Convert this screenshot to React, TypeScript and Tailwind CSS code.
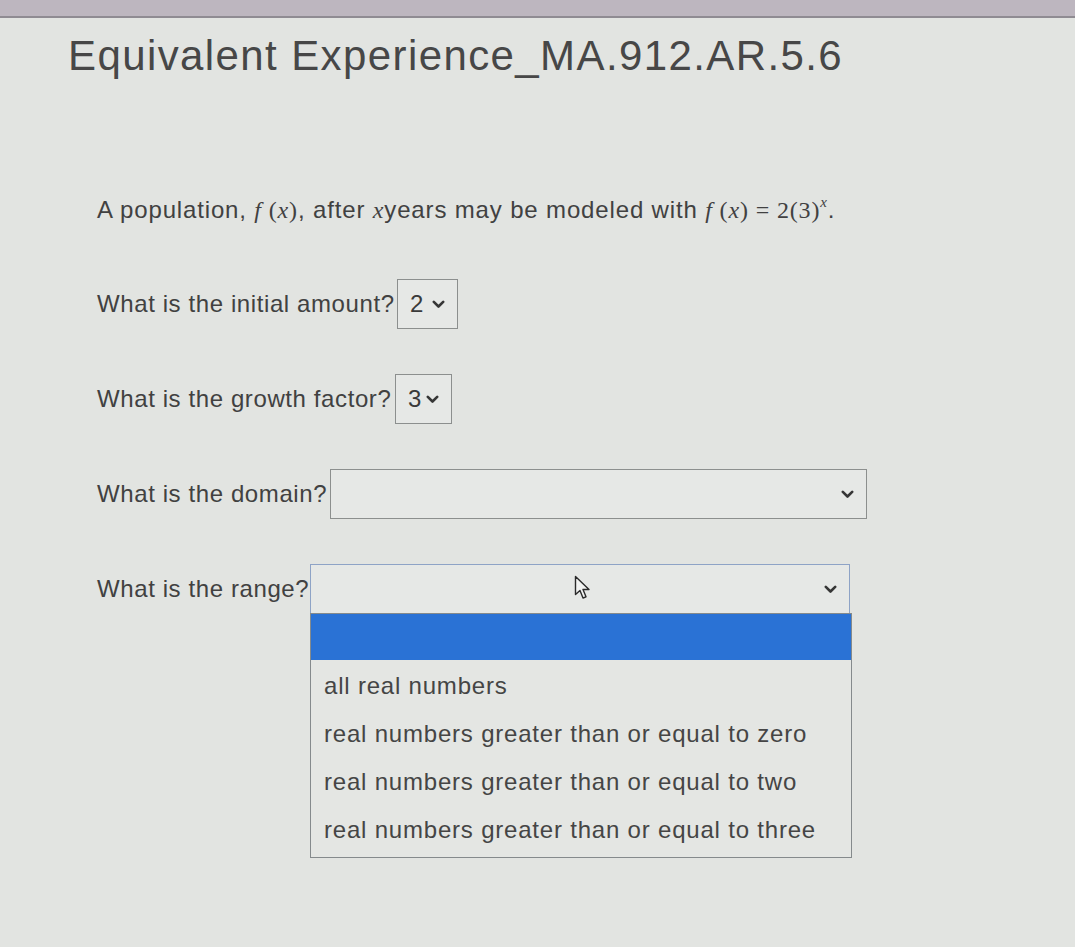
import React from 'react'

const SANS = { fontFamily: '"Liberation Sans", Arial, Helvetica, sans-serif' }

const OPTIONS = [
  'all real numbers',
  'real numbers greater than or equal to zero',
  'real numbers greater than or equal to two',
  'real numbers greater than or equal to three',
]

function Chevron() {
  return (
    <svg width="13" height="9" viewBox="0 0 13 9" className="shrink-0">
      <polyline points="1.8,1.8 6.5,6.5 11.2,1.8" fill="none" stroke="#363636" strokeWidth="2.6" strokeLinecap="round" strokeLinejoin="round" />
    </svg>
  )
}

function Cursor() {
  return (
    <svg width="18" height="26" viewBox="0 0 18 26" className="absolute left-[263px] top-[10px]">
      <path d="M1.5 1.5 L1.5 19.5 L6 15.5 L9 23 L12 21.8 L9 14.5 L15 14.5 Z" fill="#f2f3f2" stroke="#2b2b2b" strokeWidth="1.4" strokeLinejoin="round" />
    </svg>
  )
}

function Select({ value, width, focused, children }: { value?: string; width: string; focused?: boolean; children?: React.ReactNode }) {
  return (
    <div
      className={`relative shrink-0 ${width} h-[50px] flex items-center justify-between pl-[12px] pr-[12px] border ${
        focused ? 'border-[#8ea3c6]' : 'border-[#8c8f8e]'
      } bg-[#e6e8e6]`}
    >
      <span className="text-[24px] text-[#3a3a3a]">{value}</span>
      <Chevron />
      {children}
    </div>
  )
}

function Mi({ children }: { children: React.ReactNode }) {
  return <span className="italic" style={{ fontFamily: '"Liberation Serif", "Times New Roman", serif' }}>{children}</span>
}

function Mo({ children }: { children: React.ReactNode }) {
  return <span style={{ fontFamily: '"Liberation Serif", "Times New Roman", serif' }}>{children}</span>
}

export default function App() {
  return (
    <div className="min-h-[947px] w-full bg-[#e2e4e1] text-[#414141] overflow-hidden" style={SANS}>
      <div className="h-[18px] bg-[#bdb6bf] border-b-2 border-[#8f8b92]" />

      <h1 className="ml-[68px] mt-[17px] text-[42px] leading-none tracking-[1.4px] text-[#474747] font-normal">
        Equivalent Experience_MA.912.AR.5.6
      </h1>

      <div className="ml-[97px] mt-[121px] flex flex-col">
        <p className="text-[24px] leading-none tracking-[0.85px] whitespace-nowrap">
          A population, <Mi>f</Mi>
          <Mo> (</Mo>
          <Mi>x</Mi>
          <Mo>)</Mo>, after <Mi>x</Mi>years may be modeled with <Mi>f</Mi>
          <Mo> (</Mo>
          <Mi>x</Mi>
          <Mo>) = 2(3)</Mo>
          <sup className="text-[15px] top-[-0.75em]"><Mi>x</Mi></sup>.
        </p>

        <div className="mt-[57px] flex flex-col gap-[45px] text-[24px] tracking-[0.6px] whitespace-nowrap">
          <div className="flex items-center">
            <span className="w-[300px] shrink-0">What is the initial amount?</span>
            <Select value="2" width="w-[61px]" />
          </div>
          <div className="flex items-center">
            <span className="w-[298px] shrink-0">What is the growth factor?</span>
            <Select value="3" width="w-[57px]" />
          </div>
          <div className="flex items-center">
            <span className="w-[233px] shrink-0">What is the domain?</span>
            <Select width="w-[537px]" />
          </div>
          <div className="flex items-center">
            <span className="w-[213px] shrink-0">What is the range?</span>
            <Select width="w-[540px]" focused>
              <Cursor />
              <div className="absolute left-[-1px] top-full w-[542px] border border-[#858a8c] bg-[#e4e6e3] flex flex-col pb-[3px] z-10">
                <div className="h-[46px] mb-[2px] bg-[#2a72d5]" />
                {OPTIONS.map((o) => (
                  <div key={o} className="h-[48px] flex items-center pl-[13px] text-[24px] tracking-[0.8px] text-[#454545]">
                    {o}
                  </div>
                ))}
              </div>
            </Select>
          </div>
        </div>
      </div>
    </div>
  )
}
